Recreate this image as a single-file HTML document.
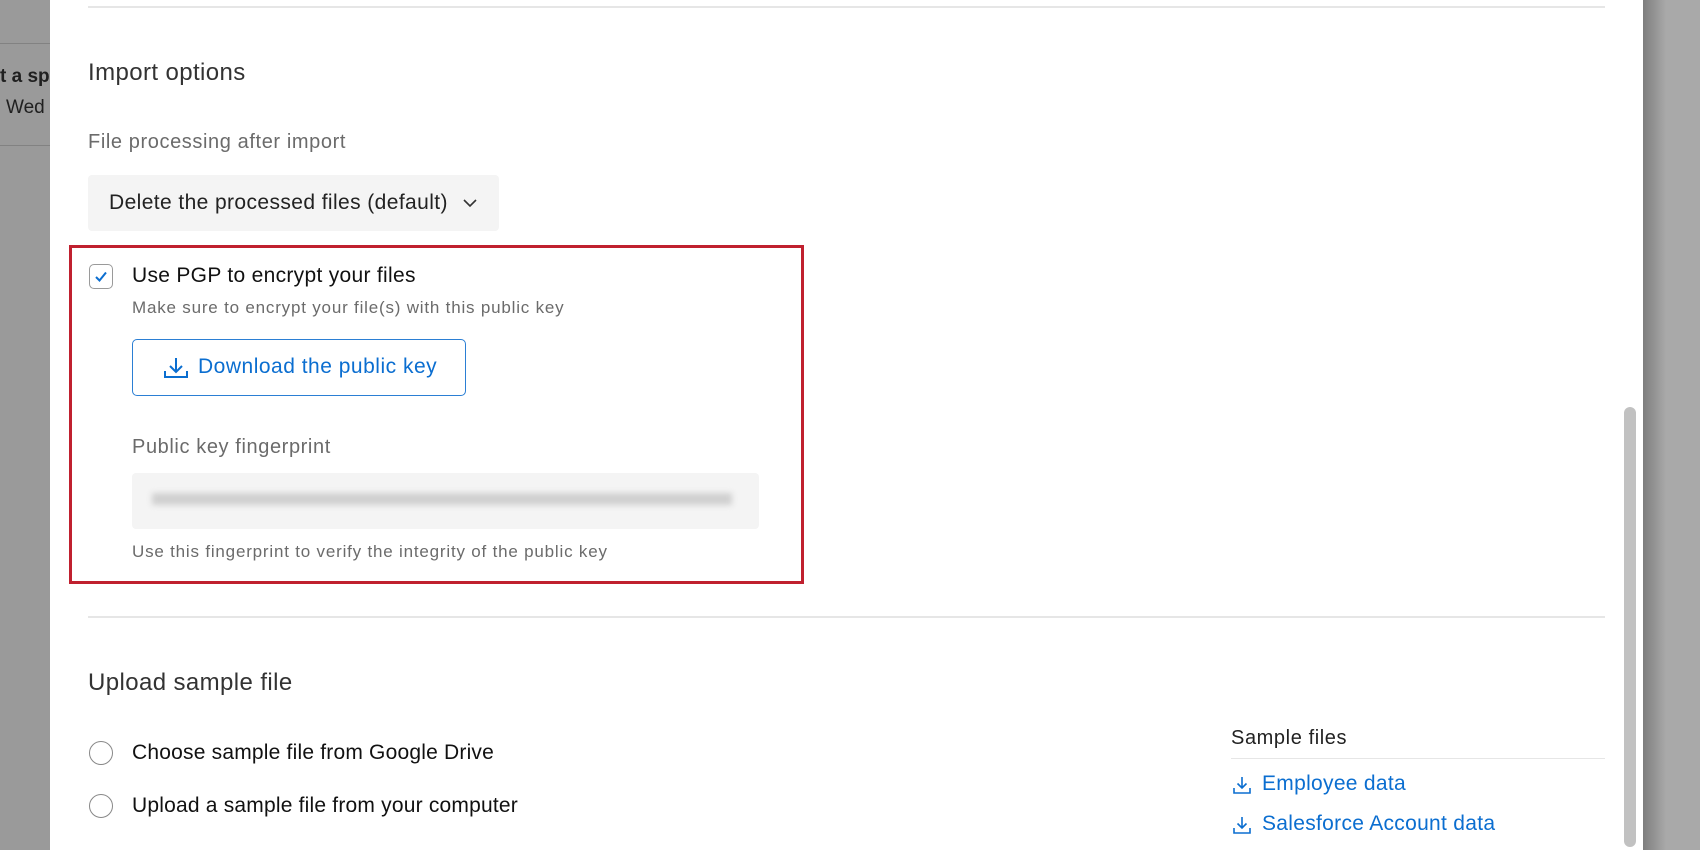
<!DOCTYPE html>
<html><head><meta charset="utf-8"><style>
*{box-sizing:border-box;margin:0;padding:0}
body{width:1700px;height:850px;overflow:hidden;background:#a3a3a3;font-family:"Liberation Sans",sans-serif;position:relative}
.abs{position:absolute;white-space:nowrap}
.modal{position:absolute;left:50px;top:0;width:1593px;height:850px;background:#fff}
.hr{position:absolute;height:2px;background:#e6e6e6}
.gray{color:#6b6b6b}
.blue{color:#0b6ed0}
</style></head><body>
<div class="abs" style="left:0;top:43px;width:50px;height:1px;background:#8a8a8a"></div>
<div class="abs" style="left:0;top:145px;width:50px;height:1px;background:#8a8a8a"></div>
<div class="abs" style="left:0;top:66px;font-size:19px;font-weight:bold;color:#222">t a sp</div>
<div class="abs" style="left:6px;top:97px;font-size:19px;color:#222">Wed</div>
<div class="abs" style="left:1643px;top:0;width:57px;height:850px;background:linear-gradient(90deg,#7d7d7d,#a9a9a9 40%)"></div>
<div class="abs" style="left:0;top:0;width:50px;height:850px;background:rgba(0,0,0,0.05)"></div>
<div class="modal"></div>
<div class="hr" style="left:88px;top:6px;width:1517px"></div>
<div class="abs" style="left:88px;top:59px;font-size:24px;letter-spacing:0.4px;color:#333">Import options</div>
<div class="abs gray" style="left:88px;top:131px;font-size:20px;letter-spacing:0.6px">File processing after import</div>
<div class="abs" style="left:88px;top:175px;width:411px;height:56px;background:#f4f4f4;border-radius:4px"></div>
<div class="abs" style="left:109px;top:191px;font-size:21px;letter-spacing:0.4px;color:#222">Delete the processed files (default)</div>
<svg class="abs" style="left:463px;top:198px" width="14" height="10" viewBox="0 0 14 10"><path d="M1 2l6 6 6-6" fill="none" stroke="#333" stroke-width="1.6"/></svg>
<div class="abs" style="left:69px;top:245px;width:735px;height:339px;border:3px solid #c0202f"></div>
<div class="abs" style="left:89px;top:264px;width:24px;height:25px;border:1.5px solid #9a9a9a;border-radius:5px"></div>
<svg class="abs" style="left:94px;top:270px" width="14" height="13" viewBox="0 0 14 13"><path d="M2 7l3.5 3.5L12 2.5" fill="none" stroke="#0b6ed0" stroke-width="2"/></svg>
<div class="abs" style="left:132px;top:264px;font-size:21px;letter-spacing:0.3px;color:#111">Use PGP to encrypt your files</div>
<div class="abs gray" style="left:132px;top:298px;font-size:17px;letter-spacing:0.8px">Make sure to encrypt your file(s) with this public key</div>
<div class="abs" style="left:132px;top:339px;width:334px;height:57px;border:1.5px solid #2b7fd4;border-radius:5px"></div>
<svg class="abs" style="left:163px;top:356px" width="26" height="24" viewBox="0 0 26 24"><path d="M13 2v14M7 10l6 6 6-6M2 15v6h22v-6" fill="none" stroke="#0b6ed0" stroke-width="2"/></svg>
<div class="abs blue" style="left:198px;top:355px;font-size:21px;letter-spacing:0.5px">Download the public key</div>
<div class="abs gray" style="left:132px;top:436px;font-size:20px;letter-spacing:0.6px">Public key fingerprint</div>
<div class="abs" style="left:132px;top:473px;width:627px;height:56px;background:#f4f4f4;border-radius:4px;overflow:hidden">
<div style="position:absolute;left:20px;top:20px;width:580px;height:12px;background:#d0d0d0;filter:blur(3px)"></div></div>
<div class="abs gray" style="left:132px;top:542px;font-size:17px;letter-spacing:0.8px">Use this fingerprint to verify the integrity of the public key</div>
<div class="hr" style="left:88px;top:616px;width:1517px"></div>
<div class="abs" style="left:88px;top:669px;font-size:24px;letter-spacing:0.4px;color:#333">Upload sample file</div>
<div class="abs" style="left:89px;top:741px;width:24px;height:24px;border:1.5px solid #888;border-radius:50%"></div>
<div class="abs" style="left:132px;top:741px;font-size:21px;letter-spacing:0.2px;color:#111">Choose sample file from Google Drive</div>
<div class="abs" style="left:89px;top:794px;width:24px;height:24px;border:1.5px solid #888;border-radius:50%"></div>
<div class="abs" style="left:132px;top:794px;font-size:21px;letter-spacing:0.2px;color:#111">Upload a sample file from your computer</div>
<div class="abs" style="left:1231px;top:727px;font-size:20px;letter-spacing:0.6px;color:#222">Sample files</div>
<div class="hr" style="left:1231px;top:758px;width:374px;height:1px"></div>
<svg class="abs" style="left:1232px;top:775px" width="20" height="20" viewBox="0 0 20 20"><path d="M10 2v11M5.5 8.5L10 13l4.5-4.5M2 13v5h16v-5" fill="none" stroke="#0b6ed0" stroke-width="1.6"/></svg>
<div class="abs blue" style="left:1262px;top:772px;font-size:21px;letter-spacing:0.3px">Employee data</div>
<svg class="abs" style="left:1232px;top:815px" width="20" height="20" viewBox="0 0 20 20"><path d="M10 2v11M5.5 8.5L10 13l4.5-4.5M2 13v5h16v-5" fill="none" stroke="#0b6ed0" stroke-width="1.6"/></svg>
<div class="abs blue" style="left:1262px;top:812px;font-size:21px;letter-spacing:0.3px">Salesforce Account data</div>
<div class="abs" style="left:1624px;top:407px;width:12px;height:440px;background:#c1c1c1;border-radius:6px"></div>
</body></html>
